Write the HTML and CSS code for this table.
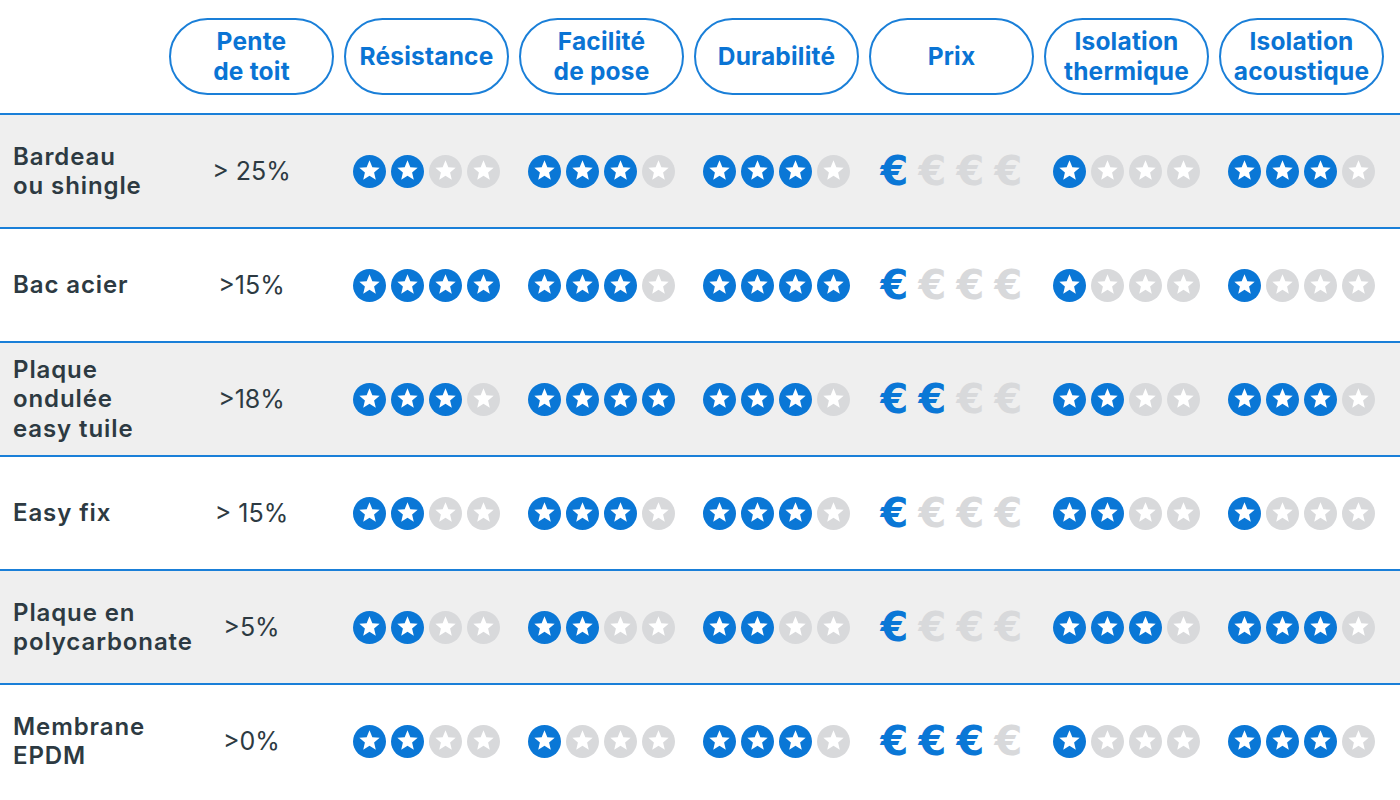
FILE: index.html
```html
<!DOCTYPE html>
<html lang="fr">
<head>
<meta charset="utf-8">
<link rel="stylesheet" href="styles.css">
</head>
<body>
<svg width="0" height="0" class="defs">
  <defs>
    <symbol id="star" viewBox="0 0 32 32">
      <circle cx="16" cy="16" r="16" fill="currentColor"/>
      <path d="M16 5.2l2.75 6.6 7.1 0.55-5.4 4.65 1.65 6.95L16 20.2l-6.1 3.75 1.65-6.95-5.4-4.65 7.1-0.55z" fill="#fff"/>
    </symbol>
  </defs>
</svg>
<div class="table" id="table">
  <div class="row head">
    <div class="cell label"></div>
    <div class="cell"><div class="pill">Pente<br>de toit</div></div>
    <div class="cell"><div class="pill">Résistance</div></div>
    <div class="cell"><div class="pill">Facilité<br>de pose</div></div>
    <div class="cell"><div class="pill">Durabilité</div></div>
    <div class="cell"><div class="pill">Prix</div></div>
    <div class="cell"><div class="pill">Isolation<br>thermique</div></div>
    <div class="cell"><div class="pill">Isolation<br>acoustique</div></div>
  </div>
</div>
<script src="app.js"></script>
</body>
</html>
```
FILE: app.js
```js
const rows = [
  ["Bardeau<br>ou shingle", "> 25%", 2, 3, 3, 1, 1, 3],
  ["Bac acier", ">15%", 4, 3, 4, 1, 1, 1],
  ["Plaque<br>ondulée<br>easy tuile", ">18%", 3, 4, 3, 2, 2, 3],
  ["Easy fix", "> 15%", 2, 3, 3, 1, 2, 1],
  ["Plaque en<br>polycarbonate", ">5%", 2, 2, 2, 1, 3, 3],
  ["Membrane<br>EPDM", ">0%", 2, 1, 3, 3, 1, 3]
];
const table = document.getElementById("table");
function stars(n) {
  let h = '<div class="icons">';
  for (let i = 0; i < 4; i++) {
    h += '<svg class="ico ' + (i < n ? "on" : "off") + '" width="33" height="33" viewBox="0 0 32 32"><use href="#star"/></svg>';
  }
  return h + "</div>";
}
function euros(n) {
  let h = '<div class="icons">';
  for (let i = 0; i < 4; i++) {
    h += '<span class="euro ' + (i < n ? "on" : "off") + '">€</span>';
  }
  return h + "</div>";
}
rows.forEach((r, idx) => {
  const el = document.createElement("div");
  el.className = "row body " + (idx % 2 === 0 ? "grey" : "white");
  el.innerHTML =
    '<div class="cell label">' + r[0] + "</div>" +
    '<div class="cell value">' + r[1] + "</div>" +
    '<div class="cell">' + stars(r[2]) + "</div>" +
    '<div class="cell">' + stars(r[3]) + "</div>" +
    '<div class="cell">' + stars(r[4]) + "</div>" +
    '<div class="cell">' + euros(r[5]) + "</div>" +
    '<div class="cell">' + stars(r[6]) + "</div>" +
    '<div class="cell">' + stars(r[7]) + "</div>";
  table.appendChild(el);
});
```
FILE: styles.css
```css
* { box-sizing: border-box; }
html, body { margin: 0; padding: 0; background: #fff; }
body {
  width: 1400px;
  height: 800px;
  overflow: hidden;
  font-family: "Inter", "Noto Sans", sans-serif;
  color: #2b3840;
}
.defs { position: absolute; }
.table { width: 1400px; }
.row {
  display: grid;
  grid-template-columns: 164px repeat(7, 175px) 11px;
  align-items: center;
}
.head { height: 113px; }
.body {
  height: 114px;
  border-top: 2px solid #1a7fd8;
}
.grey { background: #efefef; }
.white { background: #fff; }
.cell {
  display: flex;
  justify-content: center;
  align-items: center;
}
.pill {
  width: 165px;
  height: 77px;
  border: 2px solid #1a7fd8;
  border-radius: 40px;
  display: flex;
  align-items: center;
  justify-content: center;
  text-align: center;
  font-weight: 700;
  font-size: 24.5px;
  line-height: 30px;
  color: #0a74d4;
  padding-bottom: 2px;
  white-space: nowrap;
  letter-spacing: 0.2px;
}
.label {
  justify-content: flex-start;
  padding-left: 13px;
  font-size: 24px;
  font-weight: 600;
  line-height: 29.5px;
  color: #2d3a42;
  white-space: nowrap;
  letter-spacing: 0.9px;
}
.value {
  font-size: 25px;
  color: #2d3a42;
}
.icons {
  display: flex;
  gap: 5px;
  align-items: center;
}
.ico { display: block; }
.ico.on { color: #0a77d6; }
.ico.off { color: #d8d9db; }
.euro {
  display: block;
  width: 33px;
  height: 33px;
  text-align: center;
  font-family: "DejaVu Sans", sans-serif;
  font-weight: 700;
  font-size: 40px;
  line-height: 33px;
}
.euro.on { color: #0a77d6; }
.euro.off { color: #d8d9db; }
```
